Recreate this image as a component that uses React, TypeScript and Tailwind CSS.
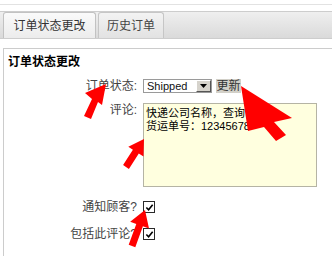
import React from "react";

type Pt = [number, number];

const FONT = "font-['Liberation_Sans','Noto_Sans_CJK_SC',sans-serif]";

// polygon for a straight arrow from tail to tip
function arrowPoints(tail: Pt, tip: Pt, headLen: number, headW: number, shaftW: number) {
  const dx = tip[0] - tail[0];
  const dy = tip[1] - tail[1];
  const len = Math.hypot(dx, dy);
  const ux = dx / len;
  const uy = dy / len;
  const nx = -uy;
  const ny = ux;
  const bx = tip[0] - ux * headLen;
  const by = tip[1] - uy * headLen;
  const pts: Pt[] = [
    [tail[0] + nx * shaftW, tail[1] + ny * shaftW],
    [bx + nx * shaftW, by + ny * shaftW],
    [bx + nx * headW, by + ny * headW],
    tip,
    [bx - nx * headW, by - ny * headW],
    [bx - nx * shaftW, by - ny * shaftW],
    [tail[0] - nx * shaftW, tail[1] - ny * shaftW],
  ];
  return pts.map((p) => `${p[0].toFixed(1)},${p[1].toFixed(1)}`).join(" ");
}

function CheckBox() {
  return (
    <span className="flex h-[12px] w-[12px] items-center justify-center border border-[#2a2a2a] bg-white">
      <svg viewBox="0 0 10 10" className="h-[9px] w-[9px]">
        <path d="M1.5 5 L4 7.5 L8.5 2" fill="none" stroke="#000" strokeWidth="1.8" />
      </svg>
    </span>
  );
}

function Row({
  label,
  top,
  children,
  alignTop = false,
}: {
  label: string;
  top: string;
  children: React.ReactNode;
  alignTop?: boolean;
}) {
  return (
    <div className={`flex ${alignTop ? "items-start" : "items-center"} ${top}`}>
      <span className="w-[133px] text-right leading-[14px] text-[#444]">{label}</span>
      <div className="ml-[6px] flex items-center">{children}</div>
    </div>
  );
}

export default function App() {
  return (
    <div className={`relative h-[256px] w-[332px] overflow-hidden bg-white text-[12px] ${FONT}`}>
      <div className="mt-[4px] border-t border-[#e2e2e2]" />

      {/* tab bar */}
      <div className="mt-[6px] flex h-[28px] items-end gap-[2px] border-y border-[#cdcdcd] bg-gradient-to-b from-[#efefef] to-[#dadada] pl-[3px]">
        <div className="flex h-[26px] w-[93px] items-center justify-center rounded-t-[3px] border-x border-t border-[#c2c2c2] bg-gradient-to-b from-[#fafafa] to-[#ececec] text-[#333]">
          订单状态更改
        </div>
        <div className="flex h-[26px] w-[66px] items-center justify-center rounded-t-[3px] border-x border-t border-[#c6c6c6] bg-gradient-to-b from-[#f3f3f3] to-[#e2e2e2] text-[#444]">
          历史订单
        </div>
      </div>

      {/* form panel */}
      <div className="ml-[3px] mt-[9px] h-[220px] border-l border-t border-[#cccccc]">
        <div className="pl-[4px] pt-[6px] font-bold leading-[14px] text-black">订单状态更改</div>

        <Row label="订单状态:" top="mt-[10px]">
          <div className="flex h-[14px] w-[69px] items-center border border-[#9a9a9a] bg-white">
            <span className="flex-1 pl-[3px] text-[11px] leading-[12px] text-[#111]">Shipped</span>
            <span className="flex h-[12px] w-[15px] items-center justify-center border border-l-[#fff] border-t-[#fff] border-r-[#555] border-b-[#555] bg-[#d6d3cc]">
              <svg viewBox="0 0 7 4" className="h-[4px] w-[7px]">
                <path d="M0 0 H7 L3.5 4 Z" fill="#000" />
              </svg>
            </span>
          </div>
          <span className="ml-[4px] flex h-[14px] w-[25px] items-center justify-center bg-[#d2d0c8] leading-[14px] text-[#333]">
            更新
          </span>
        </Row>

        <Row label="评论:" top="mt-[10px]" alignTop>
          <div className="h-[84px] w-[174px] border border-[#b5b4a4] bg-[#ffffdf] px-[2px] pt-[3px] text-[11px] leading-[13px] text-black">
            快递公司名称，查询
            <br />
            货运单号：12345678
          </div>
        </Row>

        <Row label="通知顾客?" top="mt-[13px]">
          <CheckBox />
        </Row>
        <Row label="包括此评论?" top="mt-[13px]">
          <CheckBox />
        </Row>
      </div>

      {/* red annotation arrows */}
      <svg className="pointer-events-none absolute left-0 top-0" width="332" height="256">
        <polygon points="106,84 85,93 92,99 84,116 91,119 98,102 102,105" fill="#ff0000" />
        <polygon points={arrowPoints([126, 167], [144, 139], 15, 9, 3.5)} fill="#ff0000" />
        <polygon points="241,86 292,118 274,122 286,135 276,141 264,127 248,131" fill="#ff0000" />
        <polygon points={arrowPoints([132, 246], [145, 210], 16, 10, 3.5)} fill="#ff0000" />
      </svg>
    </div>
  );
}
